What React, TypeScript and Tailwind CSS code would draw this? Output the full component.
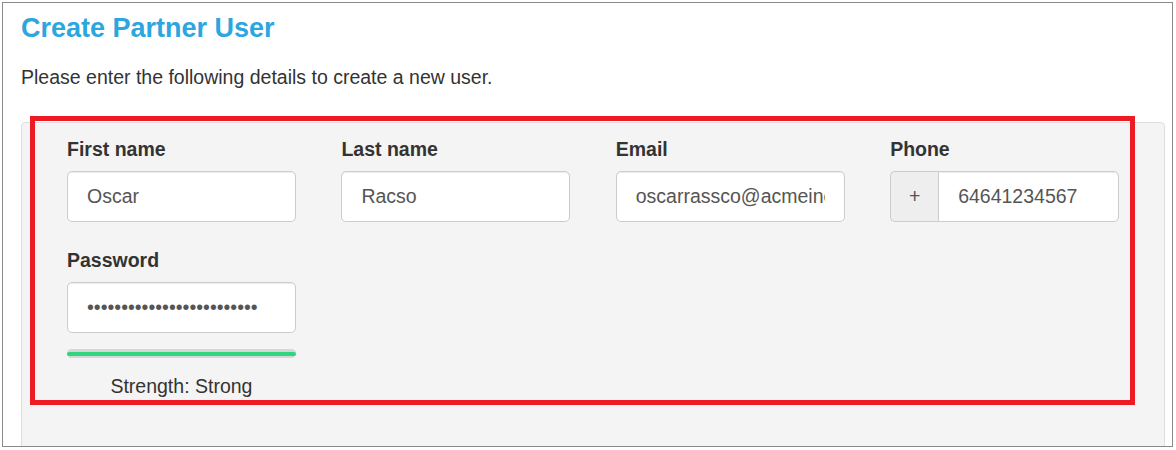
const font = { fontFamily: '"Liberation Sans", Arial, Helvetica, sans-serif' };

const inputCls =
  "block w-full h-[51px] px-[19px] bg-white border border-[#ccc] rounded-[5px] text-[19.5px] text-[#555] outline-none shadow-[inset_0_1px_1px_rgba(0,0,0,0.075)]";

function Field({ label, children }: { label: string; children: React.ReactNode }) {
  return (
    <div>
      <label className="block text-[19.5px] leading-[24px] font-bold text-[#333] mb-[10px]">{label}</label>
      {children}
    </div>
  );
}

export default function App() {
  return (
    <div className="relative w-[1176px] h-[450px] bg-white pt-[2px] pl-[2px]" style={font}>
      <div className="w-[1171px] h-[445px] border border-[#8a8a8a] pl-[18px] pr-[7px] overflow-hidden">
        <h3 className="mt-[10px] text-[27px] leading-[30px] font-bold text-[#2ca6de]">Create Partner User</h3>
        <p className="mt-[22px] text-[19.5px] leading-[24px] text-[#333]">
          Please enter the following details to create a new user.
        </p>

        <div className="mt-[33px] h-[330px] bg-[#f4f4f4] border border-[#ddd] rounded-[4px] pt-[14px] pl-[45px] pr-[45px]">
          <div className="grid grid-cols-4 gap-x-[45.5px]">
            <Field label="First name">
              <input className={inputCls} readOnly value="Oscar" style={font} />
            </Field>
            <Field label="Last name">
              <input className={inputCls} readOnly value="Racso" style={font} />
            </Field>
            <Field label="Email">
              <input className={inputCls} readOnly value="oscarrassco@acmeinc.com" style={font} />
            </Field>
            <Field label="Phone">
              <div className="flex">
                <span className="flex items-center justify-center w-[48px] h-[51px] shrink-0 bg-[#eee] border border-r-0 border-[#ccc] rounded-l-[5px] text-[19.5px] text-[#555]">
                  +
                </span>
                <input
                  className="block min-w-0 flex-1 h-[51px] px-[19px] bg-white border border-[#ccc] rounded-r-[5px] text-[19.5px] text-[#555] outline-none shadow-[inset_0_1px_1px_rgba(0,0,0,0.075)]"
                  readOnly
                  value="64641234567"
                  style={font}
                />
              </div>
            </Field>
          </div>

          <div className="grid grid-cols-4 gap-x-[45.5px] mt-[26px]">
            <div>
              <Field label="Password">
                <input className={inputCls} type="password" readOnly value="abcdefghijklmnopqrstuvwxy" style={font} />
              </Field>
              <div className="mt-[16px] h-[9px] rounded-full bg-[#d6d6d6] pt-[3px] pb-[2px]">
                <div className="h-[4px] w-full rounded-full bg-[#2fd67f]" />
              </div>
              <div className="mt-[16px] text-center text-[19.5px] leading-[24px] text-[#333]">Strength: Strong</div>
            </div>
          </div>
        </div>
      </div>

      {/* red annotation box */}
      <div className="absolute left-[30px] top-[116px] w-[1105px] h-[289px] border-[5px] border-[#ed1c24] pointer-events-none" />
    </div>
  );
}
